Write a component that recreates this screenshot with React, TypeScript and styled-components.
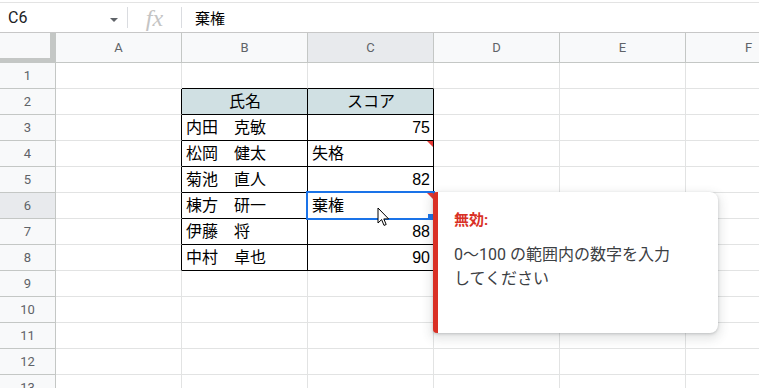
import React from "react";
import styled, { createGlobalStyle } from "styled-components";

const GlobalStyle = createGlobalStyle`
  html, body { margin: 0; padding: 0; background: #fff; }
  body {
    font-family: "Liberation Sans", Roboto, "Noto Sans CJK JP", sans-serif;
    overflow: hidden;
  }
`;

const Page = styled.div`
  width: 759px;
  height: 388px;
  overflow: hidden;
  display: flex;
  flex-direction: column;
  background: #fff;
`;

const FormulaBar = styled.div`
  margin-top: 2px;
  border-top: 1px solid #e3e3e3;
  border-bottom: 1px solid #c7c7c7;
  height: 29px;
  display: flex;
  align-items: center;
  flex-shrink: 0;
`;

const NameBox = styled.div`
  width: 127px;
  height: 100%;
  box-sizing: border-box;
  padding: 0 9px 0 8px;
  display: flex;
  align-items: center;
  justify-content: space-between;
  font: 16px Roboto, "Liberation Sans", sans-serif;
  color: #202124;
`;

const DropArrow = styled.span`
  width: 0;
  height: 0;
  border-left: 4px solid transparent;
  border-right: 4px solid transparent;
  border-top: 4px solid #5f6368;
  margin-top: 5px;
`;

const Divider = styled.div`
  width: 1px;
  height: 21px;
  background: #dadce0;
`;

const FxLabel = styled.div`
  width: 53px;
  text-align: center;
  font: italic 24px "Liberation Serif", serif;
  color: #c4c4c4;
  line-height: 26px;
`;

const FormulaText = styled.div`
  padding-left: 13px;
  font-size: 15px;
  color: #000;
  font-family: "Liberation Sans", "Noto Sans CJK JP", sans-serif;
`;

const SheetGrid = styled.div`
  flex: 1;
  display: grid;
  grid-template-columns: 56px repeat(6, 126px);
  grid-template-rows: 30px;
  grid-auto-rows: 26px;
  overflow: hidden;
`;

const Corner = styled.div`
  box-sizing: border-box;
  background: #f8f9fa;
  border-right: 6px solid #c4c7c5;
  border-bottom: 5px solid #c4c7c5;
`;

const HeaderCell = styled.div<{ $active?: boolean }>`
  box-sizing: border-box;
  background: ${(p) => (p.$active ? "#e8eaed" : "#f8f9fa")};
  border-right: 1px solid #c4c7c5;
  border-bottom: 1px solid #c4c7c5;
  display: flex;
  align-items: center;
  justify-content: center;
  font: 13px Roboto, "Liberation Sans", sans-serif;
  color: #5f6368;
`;

const DataCell = styled.div<{
  $right: string;
  $bottom: string;
  $bg: string;
  $align: string;
  $anchor?: boolean;
}>`
  box-sizing: border-box;
  position: ${(p) => (p.$anchor ? "relative" : "static")};
  background: ${(p) => p.$bg};
  border-right: 1px solid ${(p) => p.$right};
  border-bottom: 1px solid ${(p) => p.$bottom};
  display: flex;
  align-items: center;
  justify-content: ${(p) => p.$align};
  padding: 1px 3px 0 4px;
  font-size: 16px;
  line-height: 20px;
  color: #000;
  white-space: nowrap;
  font-family: "Liberation Sans", "Noto Sans CJK JP", sans-serif;
`;

const ErrorMark = styled.span`
  position: absolute;
  top: 0;
  right: 0;
  width: 0;
  height: 0;
  border-top: 6px solid #e53935;
  border-left: 6px solid transparent;
  z-index: 6;
`;

const Selection = styled.div`
  position: absolute;
  left: -2px;
  top: -2px;
  width: 129px;
  height: 29px;
  box-sizing: border-box;
  border: 2px solid #1a73e8;
  z-index: 5;
  pointer-events: none;
`;

const FillHandle = styled.span`
  position: absolute;
  left: 120px;
  top: 21px;
  width: 6px;
  height: 6px;
  background: #1a73e8;
  z-index: 6;
`;

const Cursor = styled.svg`
  position: absolute;
  left: 69px;
  top: 14px;
  z-index: 7;
`;

const Tooltip = styled.div`
  position: absolute;
  left: 125px;
  top: -1px;
  width: 285px;
  height: 141px;
  box-sizing: border-box;
  background: #fff;
  border-left: 5px solid #d93025;
  border-radius: 4px 8px 8px 4px;
  box-shadow: 0 1px 3px rgba(60, 64, 67, 0.25), 0 4px 10px 3px rgba(60, 64, 67, 0.12);
  padding: 18px 16px 0 16px;
  z-index: 20;
  font-family: Roboto, "Noto Sans CJK JP", sans-serif;
`;

const TooltipTitle = styled.div`
  font-size: 15px;
  line-height: 20px;
  font-weight: 700;
  color: #d93025;
`;

const TooltipBody = styled.div`
  margin-top: 13px;
  font-size: 16px;
  line-height: 24px;
  color: #3c4043;
  white-space: nowrap;
`;

type CellInfo = { text: string; align: "left" | "center" | "right"; error?: boolean };

const cols = ["A", "B", "C", "D", "E", "F"];
const rows = Array.from({ length: 13 }, (_, i) => i + 1);

const cells: Record<string, CellInfo> = {
  B2: { text: "氏名", align: "center" },
  C2: { text: "スコア", align: "center" },
  B3: { text: "内田　克敏", align: "left" },
  C3: { text: "75", align: "right" },
  B4: { text: "松岡　健太", align: "left" },
  C4: { text: "失格", align: "left", error: true },
  B5: { text: "菊池　直人", align: "left" },
  C5: { text: "82", align: "right" },
  B6: { text: "棟方　研一", align: "left" },
  C6: { text: "棄権", align: "left", error: true },
  B7: { text: "伊藤　将", align: "left" },
  C7: { text: "88", align: "right" },
  B8: { text: "中村　卓也", align: "left" },
  C8: { text: "90", align: "right" },
};

const GRID = "#e2e3e3";
const BLACK = "#000";
const justify = { left: "flex-start", center: "center", right: "flex-end" };

const inTable = (c: string, r: number) => (c === "B" || c === "C") && r >= 2 && r <= 8;

export default function App() {
  return (
    <Page>
      <GlobalStyle />
      <FormulaBar>
        <NameBox>
          <span>C6</span>
          <DropArrow />
        </NameBox>
        <Divider />
        <FxLabel>fx</FxLabel>
        <Divider />
        <FormulaText>棄権</FormulaText>
      </FormulaBar>
      <SheetGrid>
        <Corner />
        {cols.map((c) => (
          <HeaderCell key={c} $active={c === "C"}>
            {c}
          </HeaderCell>
        ))}
        {rows.map((r) => (
          <React.Fragment key={r}>
            <HeaderCell $active={r === 6}>{r}</HeaderCell>
            {cols.map((c) => {
              const id = `${c}${r}`;
              const info = cells[id];
              const right = inTable(c, r) || (c === "A" && r >= 2 && r <= 8) ? BLACK : GRID;
              const bottom = inTable(c, r) || ((c === "B" || c === "C") && r === 1) ? BLACK : GRID;
              const bg = r === 2 && inTable(c, r) ? "#d0e0e3" : "#fff";
              const selected = id === "C6";
              return (
                <DataCell
                  key={id}
                  $right={right}
                  $bottom={bottom}
                  $bg={bg}
                  $align={info ? justify[info.align] : "flex-start"}
                  $anchor={!!info?.error}
                >
                  {info?.text}
                  {info?.error && <ErrorMark />}
                  {selected && (
                    <>
                      <Selection />
                      <FillHandle />
                      <Cursor width="13" height="20" viewBox="0 0 13 20">
                        <path
                          d="M1 1 L1 16 L4.6 12.6 L7 18.4 L9.2 17.5 L6.8 11.9 L11.6 11.9 Z"
                          fill="#fff"
                          stroke="#000"
                          strokeWidth="1"
                          strokeLinejoin="round"
                        />
                      </Cursor>
                      <Tooltip>
                        <TooltipTitle>無効:</TooltipTitle>
                        <TooltipBody>
                          0〜100 の範囲内の数字を入力
                          <br />
                          してください
                        </TooltipBody>
                      </Tooltip>
                    </>
                  )}
                </DataCell>
              );
            })}
          </React.Fragment>
        ))}
      </SheetGrid>
    </Page>
  );
}
